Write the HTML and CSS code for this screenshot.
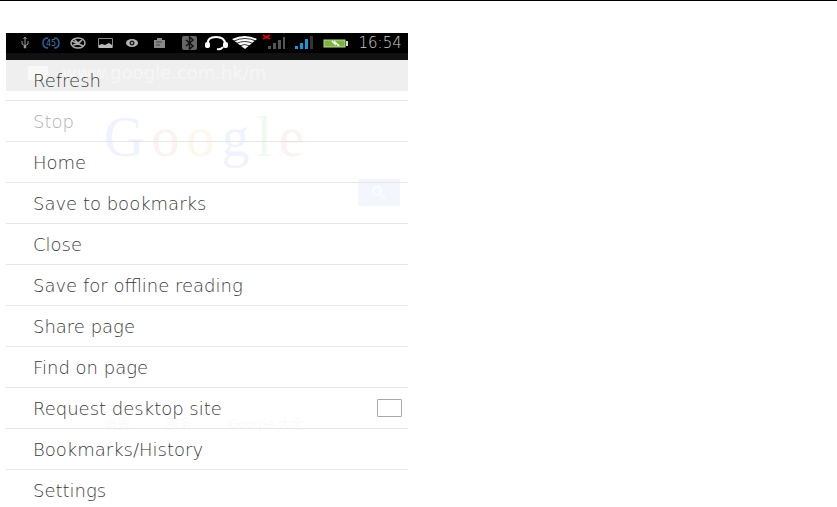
FILE: index.html
```
<!DOCTYPE html>
<html lang="en">
<head>
<meta charset="utf-8">
<title>Browser menu</title>
<link rel="stylesheet" href="styles.css">
</head>
<body>
<main class="phone">
  <header class="status">
    <svg class="status-icons" viewBox="0 0 351 20" preserveAspectRatio="xMinYMin meet" aria-hidden="true">
      <g fill="none" stroke="#999" stroke-width="1">
        <path d="M19 5v10M16 8v3l3 2 3-2V8"/><circle cx="19" cy="14" r="1" fill="#999"/>
        <path d="M17.500 6l1.500-2 1.500 2"/>
      </g>
      <g fill="none" stroke="#28649a" stroke-width="1.500"><path d="M42 5q-5 0-5 5t5 5M48 5q5 0 5 5t-5 5"/></g>
      <text x="45" y="13" class="badge-text">45</text>
      <g fill="none" stroke="#aaa" stroke-width="1.500"><ellipse cx="72" cy="10" rx="7" ry="5"/><path d="M66 8l11 5M68 6l4 4 4-3M67 12l5-1 4-4"/></g>
      <path d="M92.500 5.500h14v9h-14z" fill="none" stroke="#888"/><path d="M93 12l3-1 3 1 4-2 3 2v3H93z" fill="#bbb"/>
      <ellipse cx="126" cy="10" rx="6" ry="4" fill="#b5b5b5"/><circle cx="126" cy="10" r="2.500" fill="#222"/><circle cx="126" cy="10" r="1" fill="#bbb"/>
      <path d="M148 7h3V5h5v2h3v8h-11z" fill="#888"/><path d="M150 9h6M150 12h4" stroke="#444"/>
      <rect x="176" y="3" width="15" height="14" rx="2" fill="#666"/><path d="M180 7l7 6-3.500 3V4l3.500 3-7 6" fill="none" stroke="#111" stroke-width="1.500"/>
      <path d="M202 11q-1-7 8-7t9 7" fill="none" stroke="#fff" stroke-width="2"/>
      <rect x="199" y="9" width="5" height="6" rx="2" fill="#fff"/><rect x="217" y="9" width="5" height="6" rx="2" fill="#fff"/><path d="M217 14q-2 3-6 2" fill="none" stroke="#fff" stroke-width="2"/>
      <path d="M226 6q13-6 25 0l-12 10z" fill="#fff"/><path d="M228 8q11-5 22 0M230 10.500q9-4 17 0M233 13q6-3 11 0" fill="none" stroke="#000" stroke-width=".8"/>
      <path d="M257 2l7 4M264 2l-7 4" stroke="#d00" stroke-width="2"/>
      <path d="M262 13h3v3h-3zM267 10h3v6h-3zM272 7h3v9h-3zM277 4h2v12h-2z" fill="#555"/>
      <path d="M289 13h3v3h-3zM294 10h3v6h-3zM299 6h3v10h-3z" fill="#139bdc"/><path d="M304 3h3v13h-3z" fill="#333"/>
      <rect x="318" y="7" width="21" height="7" fill="#7fb341" stroke="#b7d98e"/><rect x="340" y="8" width="2" height="5" fill="#ddd"/><path d="M326 8l3 3v-2l4 4" fill="none" stroke="#fff" stroke-width="1.500"/>
    </svg>
    <time class="clock">16:54</time>
  </header>
  <div class="screen">
    <div class="page" aria-hidden="true">
      <div class="address"><span class="favicon"></span><span>www.google.com.hk/m</span></div>
      <div class="logo"><span class="b">G</span><span class="r">o</span><span class="y">o</span><span class="b">g</span><span class="g">l</span><span class="r">e</span></div>
      <div class="search"><svg width="20" height="14" viewBox="0 0 20 14"><circle cx="8" cy="5" r="4"/><path d="M11 8l5 5"/></svg></div>
      <div class="page-links"><span>设置</span><span>服务</span><span>Google 大全</span></div>
    </div>
    <nav class="menu">
      <button class="item">Refresh</button>
      <button class="item" disabled>Stop</button>
      <button class="item">Home</button>
      <button class="item">Save to bookmarks</button>
      <button class="item">Close</button>
      <button class="item">Save for offline reading</button>
      <button class="item">Share page</button>
      <button class="item">Find on page</button>
      <label class="item">Request desktop site<input class="check" type="checkbox"></label>
      <button class="item">Bookmarks/History</button>
      <button class="item">Settings</button>
    </nav>
  </div>
</main>
</body>
</html>
```
FILE: styles.css
```
* { box-sizing: border-box; }
body {
  margin: 0;
  height: 100vh;
  overflow: hidden;
  border-top: 1px solid #000;
  background: #fff;
  font-family: "DejaVu Sans", "Noto Sans CJK SC", sans-serif;
}
.phone {
  width: 48%;
  min-width: 320px;
  margin: 32px 0 0 6px;
}
.status {
  display: flex;
  align-items: flex-start;
  height: 27px;
  padding-right: 6px;
  background: #000;
  border-bottom: 7px solid #111;
}
.status-icons { flex: 1; min-width: 0; height: 20px; }
.badge-text { font-size: 8px; fill: #3f81b8; text-anchor: middle; }
.clock {
  color: #ccc;
  font-size: 15px;
  font-weight: 200;
  line-height: 20px;
}
.screen { position: relative; }
.page { position: absolute; inset: 0; }
.address {
  display: flex;
  align-items: center;
  gap: 14px;
  height: 31px;
  padding: 0 22px 6px;
  background: #efefef;
  color: #f6f6f6;
  font-size: 18px;
}
.favicon { width: 20px; height: 14px; background: #f9f9f9; }
.logo {
  display: flex;
  gap: 7px;
  margin-top: 18px;
  padding-left: 98px;
  font-family: "Liberation Serif", serif;
  font-size: 56px;
  line-height: 56px;
}
.b { color: #f0f2fd; }
.r { color: #fdf2f2; }
.y { color: #fef8ec; }
.g { color: #effaf1; }
.search {
  display: grid;
  place-items: center;
  width: 42px;
  height: 27px;
  margin: 14px 8px 0 auto;
  background: #f3f6fd;
}
.search svg { fill: none; stroke: #fbfcff; stroke-width: 2; }
.page-links {
  display: flex;
  gap: 36px;
  margin-top: 210px;
  padding-left: 98px;
  color: #fafafa;
  font-size: 13px;
  line-height: 16px;
}
.menu { position: relative; display: flex; flex-direction: column; }
.item {
  display: flex;
  align-items: center;
  justify-content: space-between;
  height: 41px;
  padding: 0 6px 0 27px;
  border: 0;
  border-bottom: 1px solid #e6e6e6;
  background: transparent;
  color: #3a3a3a;
  font: 200 18px "DejaVu Sans", sans-serif;
  text-align: left;
}
.item:disabled { color: #b0b0b0; }
.item:last-child { border-bottom: 0; }
.check {
  appearance: none;
  width: 25px;
  height: 18px;
  margin: 0;
  border: 1px solid #aaa;
  border-radius: 1px;
  background: #fff;
}
```
